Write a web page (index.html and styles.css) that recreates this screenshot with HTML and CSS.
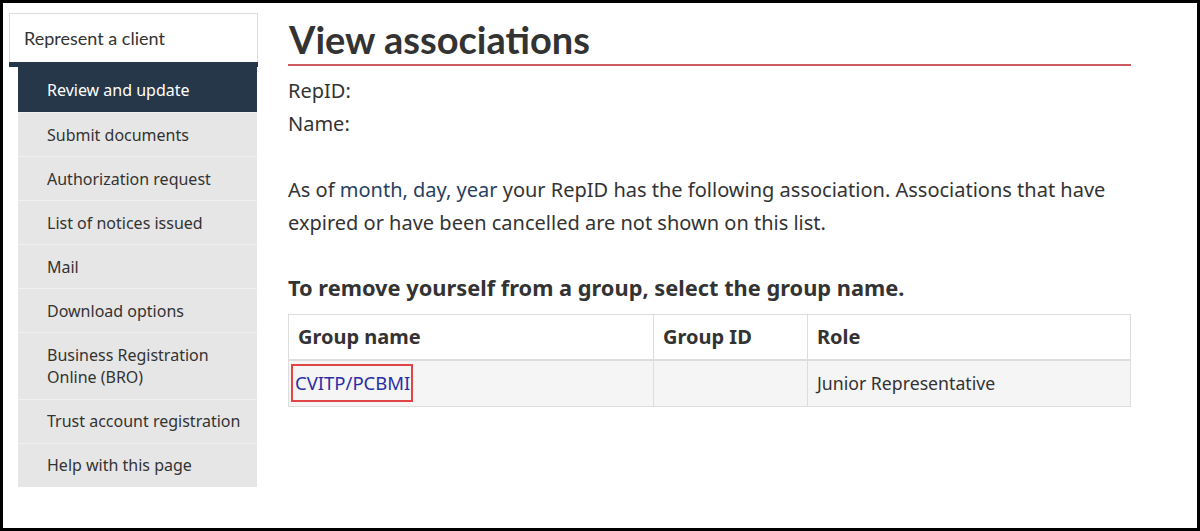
FILE: index.html
```html
<!DOCTYPE html>
<html lang="en">
<head>
<meta charset="utf-8">
<title>View associations</title>
<link rel="stylesheet" href="styles.css">
</head>
<body>
<div class="frame">
  <nav class="sidebar">
    <div class="side-head">Represent a client</div>
    <div class="side-bar"></div>
    <ul class="side-list">
      <li class="active">Review and update</li>
      <li>Submit documents</li>
      <li>Authorization request</li>
      <li>List of notices issued</li>
      <li>Mail</li>
      <li>Download options</li>
      <li>Business Registration Online (BRO)</li>
      <li>Trust account registration</li>
      <li>Help with this page</li>
    </ul>
  </nav>
  <main class="main">
    <h1 class="title">View associations</h1>
    <p class="meta">RepID:</p>
    <p class="meta">Name:</p>
    <p class="intro">As of <a class="date" href="#">month, day, year</a> your RepID has the following association. Associations that have expired or have been cancelled are not shown on this list.</p>
    <h2 class="subtitle">To remove yourself from a group, select the group name.</h2>
    <table class="groups">
      <thead>
        <tr><th class="c1">Group name</th><th class="c2">Group ID</th><th class="c3">Role</th></tr>
      </thead>
      <tbody>
        <tr><td><a class="group-link" href="#">CVITP/PCBMI</a></td><td></td><td>Junior Representative</td></tr>
      </tbody>
    </table>
  </main>
</div>
</body>
</html>
```

FILE: styles.css
```css
* { box-sizing: border-box; }
html, body { margin: 0; padding: 0; background: #fff; }
body { font-family: "Noto Sans", "Open Sans", sans-serif; color: #333; }

.frame {
  width: 1200px;
  height: 531px;
  border: 3px solid #000;
  display: flex;
  align-items: flex-start;
  padding: 10px 0 0 6px;
}

.sidebar { width: 249px; flex: none; }
.side-head {
  height: 49px;
  border: 1px solid #dcdcdc;
  border-bottom: none;
  font-family: Lato, "Noto Sans", sans-serif;
  font-size: 18px;
  color: #333;
  display: flex;
  align-items: center;
  padding-left: 14px;
  padding-bottom: 1px;
}
.side-bar { height: 5px; background: #26374a; }
.side-list {
  list-style: none;
  margin: 0 0 0 9px;
  padding: 0;
  width: 239px;
  background: #e6e6e6;
}
.side-list li {
  font-size: 16px;
  line-height: 22.5px;
  color: #333;
  padding: 10.5px 8px 10px 29px;
  border-top: 1px solid #f0f0f0;
}
.side-list li:first-child { border-top: none; }
.side-list li.active {
  background: #26374a;
  color: #fff;
  padding-top: 12px;
  padding-bottom: 10.5px;
}

.main { margin-left: 30px; width: 843px; }
.title {
  font-family: Lato, "Noto Sans", sans-serif;
  font-weight: 700;
  font-size: 38px;
  line-height: 46px;
  color: #333;
  margin: 3px 0 0;
  padding: 0 0 2px 1px;
  border-bottom: 2px solid #cc5b61;
}
.meta, .intro {
  font-size: 20px;
  line-height: 33px;
  margin: 0;
}
.meta:first-of-type { margin-top: 8px; }
.intro { margin-top: 33px; }
.date { color: #284162; text-decoration: none; }

.subtitle {
  font-size: 21.8px;
  font-weight: 700;
  line-height: 30px;
  margin: 34px 0 11px;
  color: #333;
}

.groups {
  width: 843px;
  border-collapse: collapse;
  font-size: 20px;
}
.groups th {
  text-align: left;
  font-weight: 700;
  height: 45px;
  padding: 0 9px;
  border: 1px solid #ddd;
  border-bottom: 2px solid #ddd;
  background: #fff;
}
.groups .c1 { width: 365px; }
.groups .c2 { width: 154px; }
.groups td {
  height: 47px;
  padding: 0 9px;
  border: 1px solid #ddd;
  background: #f5f5f5;
  font-size: 17.7px;
}
.groups td:first-child { padding-left: 2px; }
.group-link {
  display: inline-block;
  color: #2b2ea8;
  text-decoration: none;
  border: 2px solid #e04444;
  padding: 7px 1px 7px 2px;
  line-height: 20px;
  font-size: 18.5px;
}
```
